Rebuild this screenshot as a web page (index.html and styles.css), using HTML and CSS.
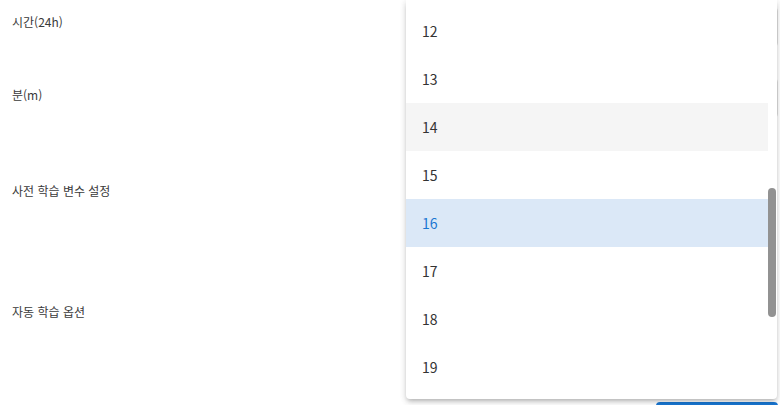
FILE: index.html
```html
<!DOCTYPE html>
<html lang="ko">
<head>
<meta charset="utf-8">
<link rel="stylesheet" href="styles.css">
</head>
<body>
<div class="page">
  <div class="row r1">
    <div class="label">시간(24h)</div>
    <div class="field"><div class="input"></div></div>
  </div>
  <div class="row r2">
    <div class="label">분(m)</div>
    <div class="field"><div class="input"></div></div>
  </div>
  <div class="row r3">
    <div class="label">사전 학습 변수 설정</div>
    <div class="field"></div>
  </div>
  <div class="row r4">
    <div class="label">자동 학습 옵션</div>
    <div class="field"></div>
  </div>
  <div class="actions"><div class="btn"></div></div>
</div>

<div class="menu">
  <ul class="list">
    <li class="item">12</li>
    <li class="item">13</li>
    <li class="item hover">14</li>
    <li class="item">15</li>
    <li class="item selected">16</li>
    <li class="item">17</li>
    <li class="item">18</li>
    <li class="item">19</li>
  </ul>
  <div class="thumb"></div>
</div>
</body>
</html>
```

FILE: styles.css
```css
html, body {
  margin: 0;
  padding: 0;
  background: #ffffff;
  font-family: "Noto Sans CJK KR", "Noto Sans", sans-serif;
  color: rgba(0, 0, 0, 0.87);
  overflow: hidden;
}

.page {
  width: 778px;
  height: 405px;
  display: flex;
  flex-direction: column;
  overflow: hidden;
}

.row {
  display: flex;
  flex-shrink: 0;
}

.label {
  width: 408px;
  padding-left: 12px;
  box-sizing: border-box;
  font-size: 12px;
  line-height: 16px;
  color: #3a3a3a;
}

.field {
  flex: 1;
}

.input {
  height: 40px;
  border: 1px solid #e0e0e0;
  border-radius: 4px;
  box-sizing: border-box;
}

.r1 { height: 72px; }
.r1 .label { padding-top: 14px; }
.r1 .input { margin-top: 7px; }

.r2 { height: 60px; }
.r2 .label { padding-top: 15px; }
.r2 .input { margin-top: 6px; }

.r3 { height: 110px; }
.r3 .label { padding-top: 51px; }

.r4 { height: 160px; }
.r4 .label { padding-top: 62px; }

.actions {
  display: flex;
  justify-content: flex-end;
  flex-shrink: 0;
}

.btn {
  width: 122px;
  height: 36px;
  border-radius: 4px;
  background: #1976d2;
}

.menu {
  position: absolute;
  left: 406px;
  top: 0;
  width: 371px;
  height: 399px;
  background: #fff;
  border-radius: 0 0 4px 4px;
  overflow: hidden;
  box-shadow: 0 3px 4px -2px rgba(0,0,0,0.2), 0 4px 6px 0 rgba(0,0,0,0.1), 0 1px 6px 1px rgba(0,0,0,0.08);
}

.list {
  list-style: none;
  margin: 0;
  padding: 7px 0 0 0;
  width: 362px;
}

.item {
  height: 48px;
  line-height: 48px;
  padding-left: 16px;
  font-size: 14px;
  color: #333333;
}

.item.hover {
  background: #f5f5f5;
}

.item.selected {
  background: #dbe8f7;
  color: #1976d2;
}

.thumb {
  position: absolute;
  right: 1px;
  top: 188px;
  width: 8px;
  height: 129px;
  border-radius: 4px;
  background: #929292;
}
```
